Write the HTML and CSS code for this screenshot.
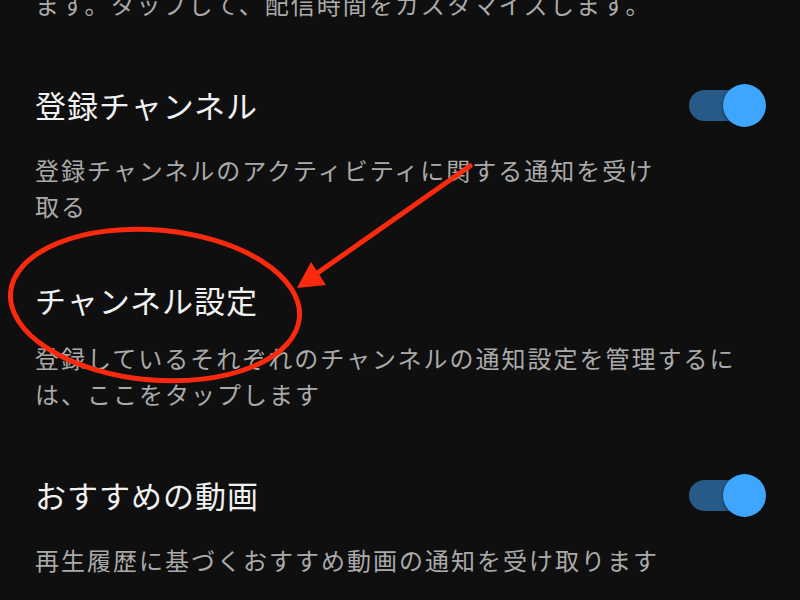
FILE: index.html
```html
<!DOCTYPE html>
<html lang="ja">
<head>
<meta charset="utf-8">
<title>通知設定</title>
<link rel="stylesheet" href="styles.css">
</head>
<body>
<div class="screen">
  <div class="list">
    <section class="item item--clipped">
      <p class="desc">ます。タップして、配信時間をカスタマイズします。</p>
    </section>
    <section class="item item--toggle">
      <div class="row">
        <h2 class="title">登録チャンネル</h2>
        <span class="switch is-on" role="switch" aria-checked="true"></span>
      </div>
      <p class="desc">登録チャンネルのアクティビティに関する通知を受け取る</p>
    </section>
    <section class="item">
      <div class="row">
        <h2 class="title">チャンネル設定</h2>
      </div>
      <p class="desc">登録しているそれぞれのチャンネルの通知設定を管理するには、ここをタップします</p>
    </section>
    <section class="item item--toggle">
      <div class="row">
        <h2 class="title">おすすめの動画</h2>
        <span class="switch is-on" role="switch" aria-checked="true"></span>
      </div>
      <p class="desc">再生履歴に基づくおすすめ動画の通知を受け取ります</p>
    </section>
  </div>
  <svg class="annotation" viewBox="0 0 800 600" width="800" height="600" aria-hidden="true">
    <ellipse cx="155" cy="305" rx="145" ry="75" transform="rotate(5 155 305)" fill="none" stroke="#fb2a0e" stroke-width="5"/>
    <line x1="470" y1="166" x2="316" y2="274" stroke="#fb2a0e" stroke-width="5" stroke-linecap="round"/>
    <polygon points="297,288 311,262 326,285" fill="#fb2a0e"/>
  </svg>
</div>
</body>
</html>
```

FILE: styles.css
```css
html, body {
  margin: 0;
  padding: 0;
  background: #0f0f0f;
}

body {
  font-family: "Noto Sans CJK JP", "Noto Sans", sans-serif;
  overflow: hidden;
}

.screen {
  position: relative;
  width: 800px;
  height: 600px;
  overflow: hidden;
}

.list {
  margin-top: -42px;
}

.item {
  padding: 28px 34px 28px 35px;
}

.row {
  display: flex;
  align-items: center;
  justify-content: space-between;
  min-height: 40px;
}

.title {
  margin: 0;
  font-size: 31px;
  font-weight: 400;
  line-height: 40px;
  letter-spacing: 1px;
  color: #f1f1f1;
}

.desc {
  margin: 20px 0 0;
  font-size: 24px;
  line-height: 36px;
  letter-spacing: 2px;
  color: #aaaaaa;
}

.item--clipped .desc {
  margin-top: 0;
}

.item--toggle .desc {
  padding-right: 90px;
}

.switch {
  position: relative;
  flex: none;
  width: 77px;
  height: 54px;
}

.switch::before {
  content: "";
  position: absolute;
  left: 0;
  top: 12px;
  width: 75px;
  height: 31px;
  border-radius: 16px;
  background: #275a87;
}

.switch::after {
  content: "";
  position: absolute;
  right: 0;
  top: 6px;
  width: 43px;
  height: 43px;
  border-radius: 50%;
  background: #3ea6ff;
  box-shadow: 0 1px 3px rgba(0, 0, 0, 0.6);
}

.annotation {
  position: absolute;
  left: 0;
  top: 0;
  pointer-events: none;
}
```
